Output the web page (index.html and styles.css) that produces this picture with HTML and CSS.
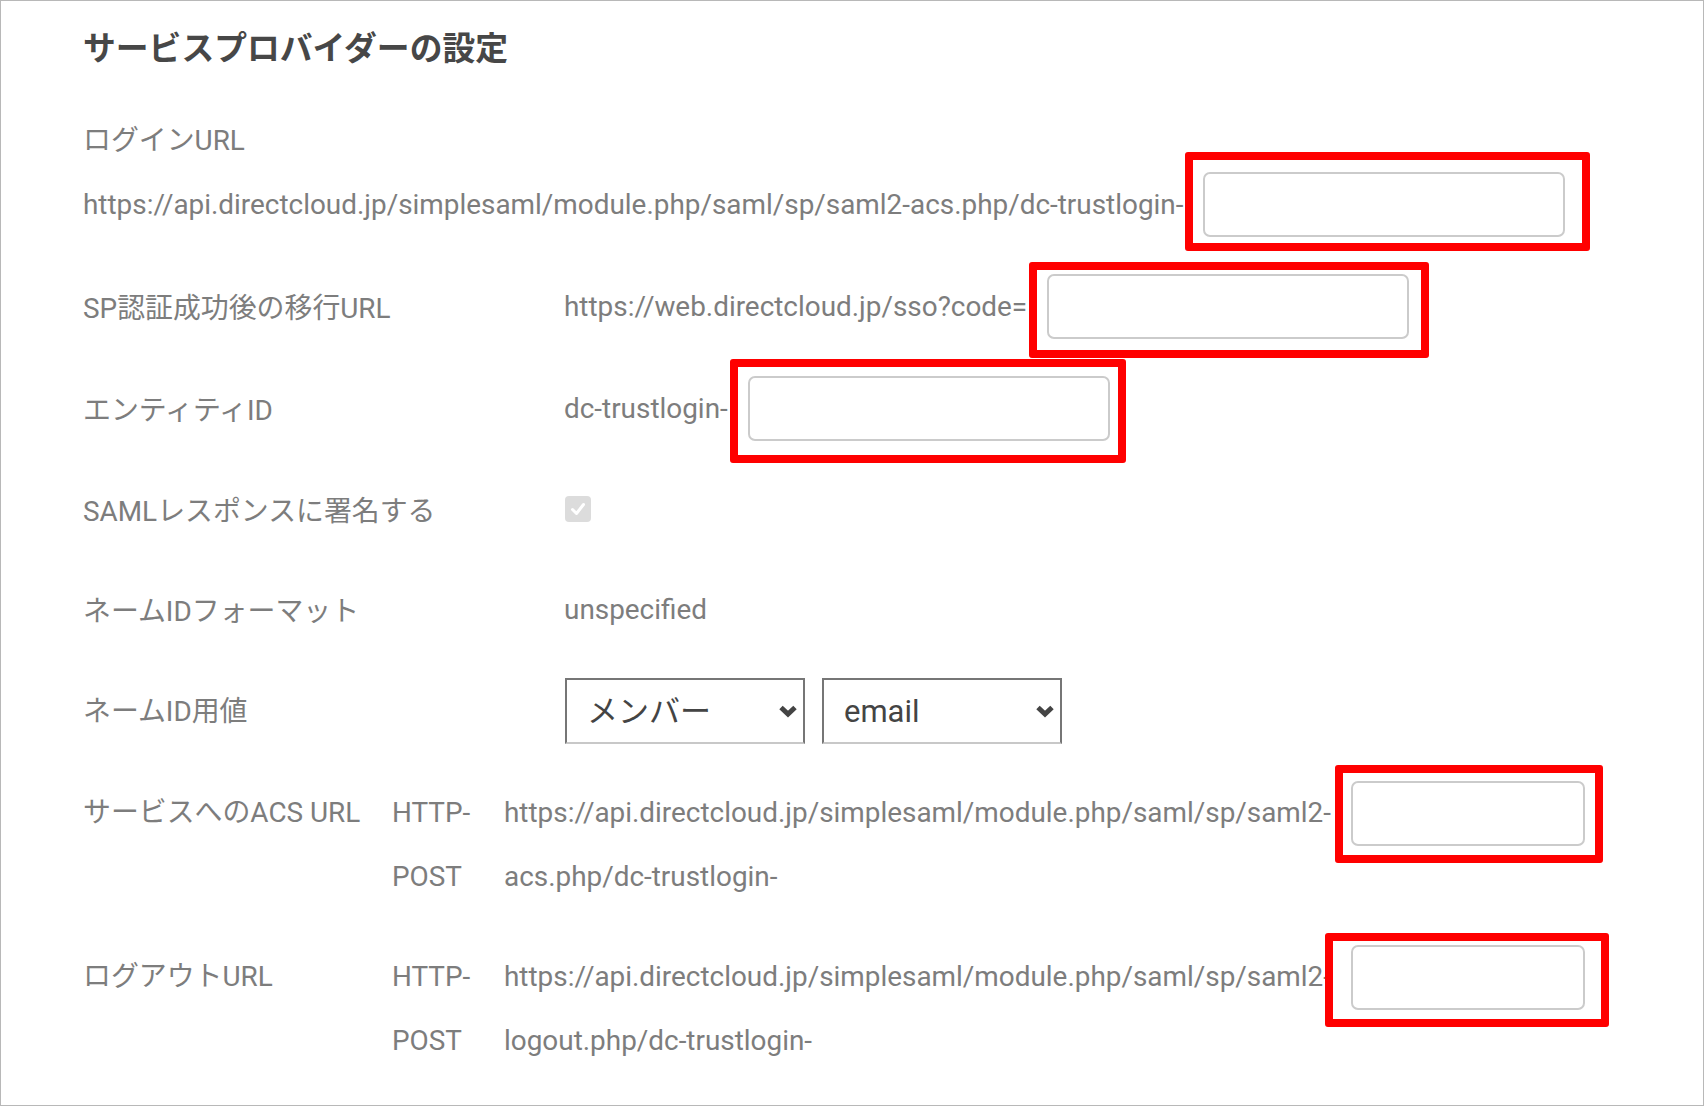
FILE: index.html
```html
<!DOCTYPE html>
<html lang="ja">
<head>
    <meta charset="UTF-8">
    <meta name="viewport" content="width=device-width, initial-scale=1.0">
    <title>サービスプロバイダーの設定</title>
    <link rel="stylesheet" href="styles.css">
</head>
<body>
    <div class="page">
        <h2 class="title">サービスプロバイダーの設定</h2>

        <!-- ログインURL -->
        <div class="field-label">ログインURL</div>
        <div class="url-line">
            <span>https://api.directcloud.jp/simplesaml/module.php/saml/sp/saml2-acs.php/dc-trustlogin-</span>
            <span class="mark mark-login"><input class="text-input" type="text"></span>
        </div>

        <div class="rows">
            <div class="row row-input">
                <div class="label">SP認証成功後の移行URL</div>
                <div class="value">
                    <span>https://web.directcloud.jp/sso?code=</span>
                    <span class="mark mark-sp"><input class="text-input" type="text"></span>
                </div>
            </div>

            <div class="row row-input">
                <div class="label">エンティティID</div>
                <div class="value">
                    <span>dc-trustlogin-</span>
                    <span class="mark mark-entity"><input class="text-input" type="text"></span>
                </div>
            </div>

            <div class="row">
                <div class="label">SAMLレスポンスに署名する</div>
                <div class="value">
                    <span class="checkbox">
                        <svg width="18" height="18" viewBox="0 0 18 18"><polyline points="3.5,9.5 7.5,13.5 14.5,4.5" fill="none" stroke="#fff" stroke-width="3" stroke-linecap="round" stroke-linejoin="round"/></svg>
                    </span>
                </div>
            </div>

            <div class="row">
                <div class="label">ネームIDフォーマット</div>
                <div class="value">unspecified</div>
            </div>

            <div class="row">
                <div class="label">ネームID用値</div>
                <div class="value">
                    <span class="select-wrap">
                        <select class="select"><option>メンバー</option></select>
                        <svg class="chevron" width="22" height="14" viewBox="0 0 22 14"><polyline points="4,3.5 11,10 18,3.5" fill="none" stroke="#444" stroke-width="5"/></svg>
                    </span>
                    <span class="select-wrap">
                        <select class="select"><option>email</option></select>
                        <svg class="chevron" width="22" height="14" viewBox="0 0 22 14"><polyline points="4,3.5 11,10 18,3.5" fill="none" stroke="#444" stroke-width="5"/></svg>
                    </span>
                </div>
            </div>
        </div>

        <!-- 二行になるURL -->
        <div class="row-multi">
            <div class="label-narrow">サービスへのACS URL</div>
            <div class="method">HTTP-<br>POST</div>
            <div class="url-lines">
                <div class="url-first">
                    <span>https://api.directcloud.jp/simplesaml/module.php/saml/sp/saml2-</span>
                    <span class="mark mark-acs"><input class="text-input short" type="text"></span>
                </div>
                <div>acs.php/dc-trustlogin-</div>
            </div>
        </div>

        <div class="row-multi">
            <div class="label-narrow">ログアウトURL</div>
            <div class="method">HTTP-<br>POST</div>
            <div class="url-lines">
                <div class="url-first">
                    <span>https://api.directcloud.jp/simplesaml/module.php/saml/sp/saml2-</span>
                    <span class="mark mark-logout"><input class="text-input short" type="text"></span>
                </div>
                <div>logout.php/dc-trustlogin-</div>
            </div>
        </div>
    </div>
</body>
</html>
```

FILE: styles.css
```css
* {
    margin: 0;
    padding: 0;
    box-sizing: border-box;
}

body {
    background: #fff;
    font-family: Roboto, "Noto Sans CJK JP", sans-serif;
    font-size: 27.9px;
    color: #7d7d7d;
}

.page {
    height: 100vh;
    border: 1px solid #b8b8b8;
    padding-left: 82px;
    white-space: nowrap;
    overflow: hidden;
}

/* 見出し */
.title {
    margin-top: 28px;
    font-size: 32.8px;
    line-height: 40px;
    font-weight: 700;
    color: #474747;
}

.field-label {
    margin-top: 40px;
    line-height: 64px;
}

.url-line {
    display: flex;
    align-items: center;
    height: 64px;
    margin-top: -1px;
}

/* 一行の項目 */
.rows {
    margin-top: 19px;
}

.row {
    display: flex;
    align-items: center;
    height: 100px;
}

.row-input {
    height: 102px;
}

.label {
    width: 481px;
    flex-shrink: 0;
}

.value {
    display: flex;
    align-items: center;
}

/* 入力欄 */
.text-input {
    display: block;
    width: 362px;
    height: 65px;
    border: 2px solid #cbcbcb;
    border-radius: 7px;
    background: #fff;
    outline: none;
}

.text-input.short {
    width: 234px;
}

/* 赤枠の注記 */
.mark {
    position: relative;
    display: inline-block;
    margin-left: 20px;
}

.mark::after {
    content: '';
    position: absolute;
    border: 8px solid #ff0000;
    border-radius: 3px;
    pointer-events: none;
}

.mark-login::after { inset: -20px -25px -14px -18px; }
.mark-sp::after { inset: -12px -20px -19px -18px; }
.mark-entity::after { inset: -17px -16px -22px -18px; }
.mark-acs::after { inset: -16px -18px -17px -16px; }
.mark-logout::after { inset: -12px -24px -17px -26px; }

/* チェックボックス */
.checkbox {
    display: flex;
    align-items: center;
    justify-content: center;
    width: 26px;
    height: 26px;
    margin-left: 1px;
    border-radius: 4px;
    background: #dcdcdc;
}

/* セレクト */
.select-wrap {
    position: relative;
    display: inline-block;
    margin-left: 1px;
    margin-top: 4px;
}

.select-wrap + .select-wrap {
    margin-left: 17px;
}

.select {
    appearance: none;
    -webkit-appearance: none;
    display: block;
    width: 240px;
    height: 66px;
    padding-left: 20px;
    border: 2px solid #767676;
    border-bottom-color: #c8c8c8;
    border-radius: 0;
    background: #fff;
    font-family: Roboto, "Noto Sans CJK JP", sans-serif;
    font-size: 31px;
    color: #444;
    outline: none;
}

.chevron {
    position: absolute;
    right: 6px;
    top: 26px;
}

/* 二行の項目 */
.row-multi {
    display: flex;
    line-height: 64px;
    margin-top: 22px;
}

.row-multi + .row-multi {
    margin-top: 36px;
}

.label-narrow {
    width: 309px;
    flex-shrink: 0;
}

.method {
    width: 112px;
    flex-shrink: 0;
}

.url-first {
    display: flex;
    align-items: center;
    height: 64px;
}
```
